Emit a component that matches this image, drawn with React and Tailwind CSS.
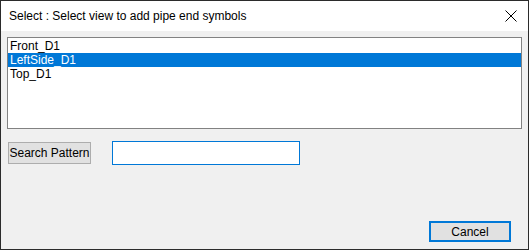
import { useState } from "react";

const views = ["Front_D1", "LeftSide_D1", "Top_D1"];

const App = () => {
	const [selected, setSelected] = useState(1);
	const [pattern, setPattern] = useState("");

	return (
		<div
			className="w-[529px] h-[250px] border border-[#2b2b2b] flex flex-col bg-[#f0f0f0] text-[12px] text-black overflow-hidden"
			style={{ fontFamily: '"Liberation Sans", Arial, sans-serif' }}
		>
			{/* title bar */}
			<div className="h-[30px] bg-white flex items-center justify-between pl-2 pr-[10px] shrink-0">
				<span className="text-[12px] leading-none whitespace-nowrap">Select : Select view to add pipe end symbols</span>
				<svg width="12" height="12" viewBox="0 0 12 12" className="mr-[1px]">
					<path d="M0.5 0.5 L11.5 11.5 M11.5 0.5 L0.5 11.5" stroke="#000" strokeWidth="1" fill="none" />
				</svg>
			</div>

			{/* list of views */}
			<div className="ml-[6px] mt-[6px] w-[515px] h-[92px] border border-[#828282] bg-white pt-[1px] shrink-0">
				{views.map((v, i) => (
					<div
						key={v}
						onClick={() => setSelected(i)}
						className={
							"h-[14px] pl-[2px] leading-[14px] text-[12px] cursor-default " +
							(i === selected ? "bg-[#0078d7] text-white" : "")
						}
					>
						{v}
					</div>
				))}
			</div>

			{/* search row */}
			<div className="flex items-center mt-[12px] ml-[7px] shrink-0">
				<button className="w-[83px] h-[22px] p-0 bg-[#e1e1e1] border border-[#adadad] text-[12px] leading-none whitespace-nowrap">
					Search Pattern
				</button>
				<input
					value={pattern}
					onChange={(e) => setPattern(e.target.value)}
					className="ml-[21px] w-[188px] h-[24px] bg-white border border-[#0078d7] outline-none px-1 text-[12px]"
				/>
			</div>

			<div className="flex-1" />

			<div className="flex justify-end pr-[17px] pb-[7px] shrink-0">
				<button className="w-[82px] h-[21px] p-0 bg-[#e1e1e1] border-2 border-[#0078d7] text-[12px] leading-none">
					Cancel
				</button>
			</div>
		</div>
	);
};

export default App;
